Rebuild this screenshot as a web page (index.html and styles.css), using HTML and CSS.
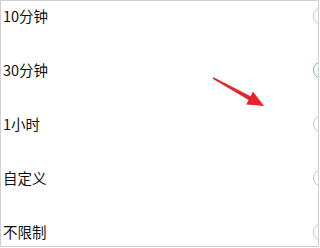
FILE: index.html
```
<!DOCTYPE html>
<html lang="zh-CN">

<head>
    <meta charset="UTF-8">
    <meta name="viewport" content="width=device-width, initial-scale=1.0">
    <title>时长</title>
    <link rel="stylesheet" href="styles.css">
</head>

<body>
    <div class="frame">
        <ul class="options">
            <li class="option">
                <span class="label">10分钟</span>
                <span class="radio"></span>
            </li>
            <li class="option">
                <span class="label">30分钟</span>
                <span class="radio checked"></span>
            </li>
            <li class="option">
                <span class="label">1小时</span>
                <span class="radio"></span>
            </li>
            <li class="option">
                <span class="label">自定义</span>
                <span class="radio"></span>
            </li>
            <li class="option">
                <span class="label">不限制</span>
                <span class="radio"></span>
            </li>
        </ul>

        <!-- pointer drawn over the list -->
        <svg class="arrow" width="60" height="36" viewBox="0 0 60 36">
            <polygon points="1.4,1.3 38.6,20.2 40.9,15.6 52,30 34.2,28.4 36.6,23.9 0.6,2.7" fill="#e6232b"/>
        </svg>
    </div>
</body>

</html>
```

FILE: styles.css
```
* {
    margin: 0;
    padding: 0;
    box-sizing: border-box;
}

body {
    background-color: #fff;
    font-family: "Noto Sans CJK SC", "Noto Sans", sans-serif;
}

.frame {
    position: relative;
    width: 319px;
    height: 247px;
    border: 1px solid #cfcfcf;
    overflow: hidden;
    background-color: #fff;
}

.options {
    list-style: none;
    display: flex;
    flex-direction: column;
    gap: 34px;
    padding-top: 5px;
}

.option {
    display: flex;
    justify-content: space-between;
    align-items: center;
    height: 20px;
    padding-left: 2px;
}

.label {
    font-size: 14.5px;
    line-height: 20px;
    color: #111;
}

.radio {
    width: 18px;
    height: 18px;
    margin-right: -13px;
    border-radius: 50%;
    border: 1.5px solid #c6c6c6;
}

.checked {
    border-color: #5ccb8f;
    position: relative;
}

.checked:after {
    content: "";
    position: absolute;
    left: 3px;
    top: 3px;
    width: 9px;
    height: 9px;
    border-radius: 50%;
    background-color: #c4efd6;
}

.arrow {
    position: absolute;
    left: 211px;
    top: 75px;
}
```
